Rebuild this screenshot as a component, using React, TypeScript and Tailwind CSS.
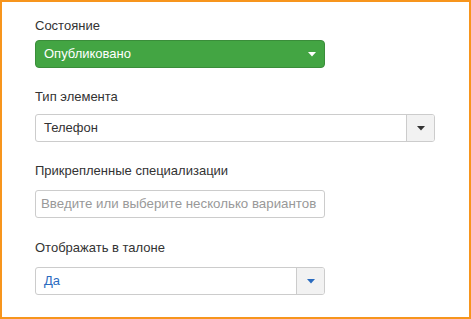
import React from 'react';

function Caret({ color }: { color: string }) {
  return (
    <svg width="8" height="5" viewBox="0 0 8 5" className="block">
      <path d="M0 0 L8 0 L4 4.5 Z" fill={color} />
    </svg>
  );
}

function Label({ children, className = '' }: { children: React.ReactNode; className?: string }) {
  return <div className={`h-[18px] leading-[18px] text-[13px] text-[#333] ${className}`}>{children}</div>;
}

function App() {
  return (
    <div
      className="w-[471px] h-[319px] border-2 border-[#f7951d] bg-white overflow-hidden"
      style={{ fontFamily: '"Liberation Sans", Arial, sans-serif' }}
    >
      <div className="pl-[33px] pt-[15px]">
        <Label>Состояние</Label>
        <div className="mt-[5px] w-[290px] h-[28px] rounded-[4px] bg-[#43a543] border border-[#3a8d3a] flex items-center justify-between pl-[8px] pr-[8px]">
          <span className="text-[13px] text-white">Опубликовано</span>
          <Caret color="#ffffff" />
        </div>

        <Label className="mt-[20px]">Тип элемента</Label>
        <div className="mt-[8px] w-[400px] h-[28px] rounded-[3px] border border-[#cccccc] flex overflow-hidden">
          <div className="flex-1 flex items-center pl-[8px] text-[13px] text-[#333]">Телефон</div>
          <div className="w-[28px] border-l border-[#cccccc] bg-[#f2f2f2] flex items-center justify-center">
            <Caret color="#333333" />
          </div>
        </div>

        <Label className="mt-[20px]">Прикрепленные специализации</Label>
        <div className="mt-[10px] w-[290px] h-[28px] rounded-[3px] border border-[#cccccc] flex items-center pl-[5px] text-[13.3px] text-[#999] whitespace-nowrap overflow-hidden">
          Введите или выберите несколько вариантов
        </div>

        <Label className="mt-[21px]">Отображать в талоне</Label>
        <div className="mt-[10px] w-[290px] h-[28px] rounded-[3px] border border-[#cccccc] flex overflow-hidden">
          <div className="flex-1 flex items-center pl-[8px] text-[13px] text-[#2a6bbf]">Да</div>
          <div className="w-[28px] border-l border-[#cccccc] bg-[#f2f2f2] flex items-center justify-center">
            <Caret color="#2a6bbf" />
          </div>
        </div>
      </div>
    </div>
  );
}

export default App;
